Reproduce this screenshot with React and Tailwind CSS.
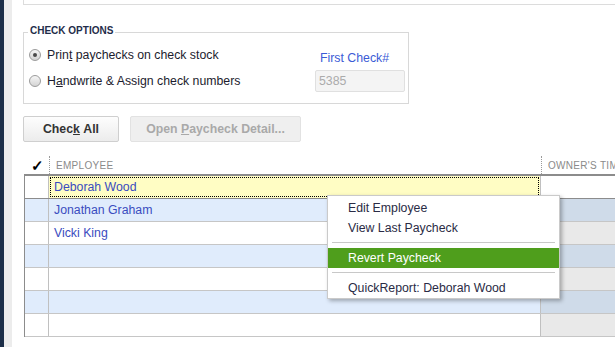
import React from "react";

const rows = [
  { name: "Deborah Wood", selected: true },
  { name: "Jonathan Graham" },
  { name: "Vicki King" },
  {},
  {},
  {},
  {},
];

const Radio = ({ checked }) => (
  <span className="w-[12px] h-[12px] rounded-full border border-[#9c9c9c] bg-linear-to-b from-[#f6f6f6] to-[#d4d4d4] flex items-center justify-center">
    {checked && <span className="w-[4px] h-[4px] rounded-full bg-[#4a4a4a]" />}
  </span>
);

const menuItem = "h-[20px] flex items-center pl-[20px] text-[#2a2b45]";

const App = () => {
  return (
    <div
      className="relative w-[615px] h-[347px] overflow-hidden flex bg-white text-[12.3px]"
      style={{ fontFamily: '"Liberation Sans", Arial, sans-serif' }}
    >
      <div className="w-[4px] shrink-0 bg-[#1c2e48]" />
      <div className="w-[8px] shrink-0 bg-[#ececec]" />

      <div className="flex-1 min-w-0 pl-[11px]">
        {/* previous panel edge */}
        <div className="h-[5px] border-l border-b border-[#dcdcdc]" />

        {/* check options */}
        <div className="relative mt-[27px] w-[386px] h-[72px] border border-[#d8d8d8] flex justify-between">
          <span className="absolute -top-[8px] left-[4px] px-[2px] bg-white text-[10px] font-bold leading-[12px] text-[#1f2d4a]">
            CHECK OPTIONS
          </span>
          <div className="pl-[5px] pt-[13px] flex flex-col gap-[8px] text-[#1c1c2e]">
            <div className="h-[18px] flex items-center gap-[6px]">
              <Radio checked />
              <span>
                Prin<span className="underline">t</span> paychecks on check stock
              </span>
            </div>
            <div className="h-[18px] flex items-center gap-[6px]">
              <Radio />
              <span>
                H<span className="underline">a</span>ndwrite &amp; Assign check numbers
              </span>
            </div>
          </div>
          <div className="pr-[3px] pt-[18px] flex flex-col">
            <span className="pl-[5px] leading-[14px] text-[#3b5bd6]">First Check#</span>
            <div className="mt-[5px] w-[90px] h-[22px] rounded-[2px] border border-[#e0e0e0] bg-[#f4f4f4] flex items-center pl-[3px] text-[#ababab]">
              5385
            </div>
          </div>
        </div>

        {/* buttons */}
        <div className="mt-[12px] flex gap-[11px]">
          <div className="w-[96px] h-[26px] rounded-[2px] border border-[#cfcfcf] bg-linear-to-b from-[#fdfdfd] to-[#ececec] flex items-center justify-center font-bold text-[#333]">
            Chec<span className="underline">k</span>&nbsp;All
          </div>
          <div className="w-[171px] h-[26px] rounded-[2px] border border-[#e2e2e2] bg-[#efefef] flex items-center justify-center font-bold text-[#a9a9a9]">
            Open&nbsp;<span className="underline">P</span>aycheck Detail...
          </div>
        </div>

        {/* header */}
        <div className="mt-[14px] h-[18px] ml-[2px] flex items-center text-[10px] tracking-[0.3px] text-[#8a8a8a]">
          <div className="w-[24px] shrink-0 h-full flex items-center justify-end pr-[5px]">
            <span className="text-[15px] font-bold text-black leading-none">✓</span>
          </div>
          <div className="w-[492px] shrink-0 h-full flex items-center border-l border-dotted border-[#9a9a9a] pl-[6px]">
            EMPLOYEE
          </div>
          <div className="flex-1 min-w-[80px] h-full flex items-center border-l border-dotted border-[#9a9a9a] pl-[6px] whitespace-nowrap">
            OWNER'S TIME
          </div>
        </div>

        {/* table */}
        <div className="ml-[1px] border-t-2 border-l border-[#8c8c8c]">
          {rows.map((row, i) => {
            const blue = i % 2 === 1;
            return (
              <div
                key={i}
                className={`h-[23px] flex border-b ${
                  row.selected ? "border-[#8c8c8c]" : "border-[#c6c6c6]"
                }`}
              >
                <div
                  className={`w-[24px] shrink-0 border-r border-[#c0c0c0] ${
                    blue ? "bg-[#e0ecfc]" : "bg-white"
                  }`}
                />
                <div
                  className={`w-[492px] shrink-0 border-r border-[#c0c0c0] ${
                    row.selected ? "bg-[#fffdc4] p-[1px]" : blue ? "bg-[#e0ecfc]" : "bg-white"
                  }`}
                >
                  <div
                    className={`h-full flex items-center text-[#3a4cc0] ${
                      row.selected ? "pl-[3px] border border-dotted border-black" : "pl-[5px]"
                    }`}
                  >
                    {row.name}
                  </div>
                </div>
                <div
                  className={`flex-1 min-w-[80px] ${
                    row.selected ? "bg-white" : blue ? "bg-[#cfdbe9]" : "bg-[#e9e9e9]"
                  }`}
                />
              </div>
            );
          })}
        </div>
      </div>

      {/* context menu */}
      <div className="absolute left-[327px] top-[195px] w-[233px] h-[104px] bg-white border border-[#cacaca] shadow-[2px_2px_4px_rgba(0,0,0,0.3)] pt-[2px]">
        <div className={menuItem}>Edit Employee</div>
        <div className={menuItem}>View Last Paycheck</div>
        <div className="h-[10px] flex items-center px-[4px]">
          <div className="h-[2px] w-full border-t border-[#c8c8c8] border-b border-b-white" />
        </div>
        <div className="h-[20px] flex items-center pl-[20px] bg-[#4f9e1c] text-white">
          Revert Paycheck
        </div>
        <div className="h-[10px] flex items-center px-[4px]">
          <div className="h-[2px] w-full border-t border-[#c8c8c8] border-b border-b-white" />
        </div>
        <div className={menuItem}>QuickReport: Deborah Wood</div>
      </div>
    </div>
  );
};

export default App;
